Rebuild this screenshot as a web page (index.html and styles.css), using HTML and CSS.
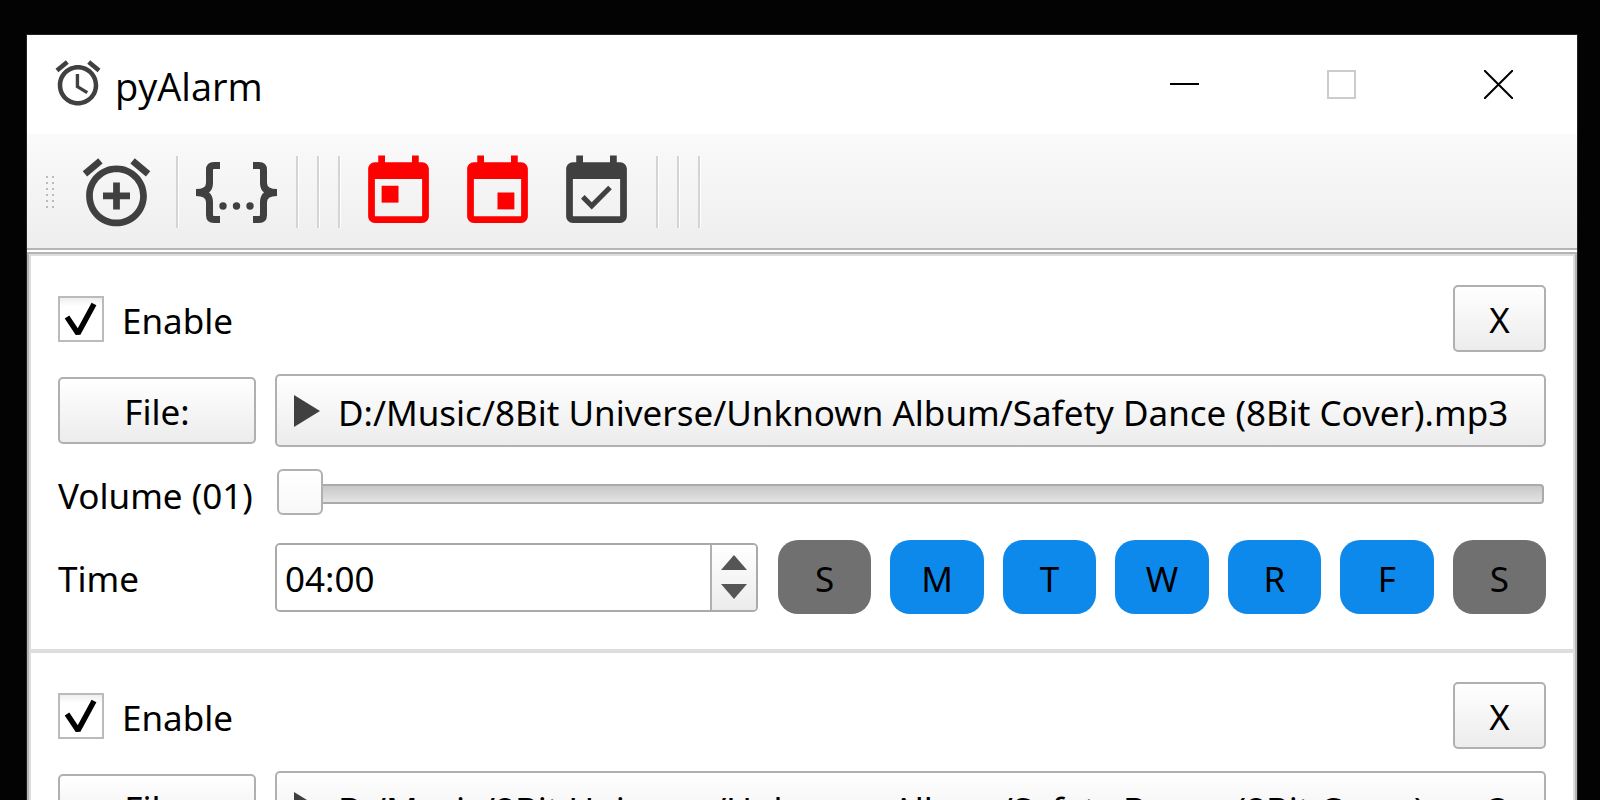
FILE: index.html
```html
<!DOCTYPE html>
<html lang="en">
  <head>
    <meta charset="UTF-8" />
    <meta name="viewport" content="width=device-width, initial-scale=1.0" />
    <title>pyAlarm</title>
    <link rel="stylesheet" href="styles.css">
  </head>
  <body>
    <!-- shared icon shapes -->
    <svg class="sprite" aria-hidden="true">
      <symbol id="bells" viewBox="0 0 24 24">
        <path d="M22 5.72l-4.6-3.86-1.29 1.53 4.6 3.86L22 5.72zM7.88 3.39L6.6 1.86 2 5.71l1.29 1.53 4.59-3.85zM12 4c-4.97 0-9 4.03-9 9s4.02 9 9 9c4.97 0 9-4.03 9-9s-4.03-9-9-9zm0 16c-3.87 0-7-3.13-7-7s3.13-7 7-7 7 3.13 7 7-3.13 7-7 7z" />
      </symbol>
      <symbol id="calendar" viewBox="0 0 24 24">
        <path d="M19 3h-1V1h-2v2H8V1H6v2H5c-1.11 0-1.99.9-1.99 2L3 19c0 1.1.89 2 2 2h14c1.1 0 2-.9 2-2V5c0-1.1-.9-2-2-2zm0 16H5V8h14v11z" />
      </symbol>
      <symbol id="check" viewBox="0 0 46 46">
        <path d="M9 21l11 16.500L36 8" fill="none" stroke="#000" stroke-width="5.500" stroke-linejoin="bevel" />
      </symbol>
    </svg>

    <div class="window">
      <header class="titlebar">
        <svg class="app-icon" viewBox="0 0 24 24">
          <use href="#bells" />
          <path d="M12.5 8H11v6l4.75 2.85.75-1.23-4-2.37V8z" />
        </svg>
        <h1 class="title">pyAlarm</h1>
        <div class="window-buttons">
          <button class="window-button" aria-label="Minimize">
            <svg viewBox="0 0 29 29"><path d="M0 14h29" stroke="#000" stroke-width="2" /></svg>
          </button>
          <button class="window-button" aria-label="Maximize" disabled>
            <svg viewBox="0 0 29 29"><path d="M1 1h27v27H1z" fill="none" stroke="#ccc" stroke-width="2" /></svg>
          </button>
          <button class="window-button" aria-label="Close">
            <svg viewBox="0 0 29 29"><path d="M0 0l29 29M29 0L0 29" stroke="#000" stroke-width="2" /></svg>
          </button>
        </div>
      </header>

      <div class="toolbar">
        <span class="grip"></span>
        <button class="tool" aria-label="Add alarm">
          <svg viewBox="0 0 24 24">
            <use href="#bells" />
            <path d="M13 9h-2v3H8v2h3v3h2v-3h3v-2h-3V9z" />
          </svg>
        </button>
        <span class="separator"></span>
        <button class="tool" aria-label="Edit JSON">
          <svg viewBox="0 0 81 81">
            <g fill="none" stroke="#404040" stroke-width="7">
              <path d="M24 13.500H18Q13.500 13.500 13.500 18V31Q13.500 40.500 0 40.500Q13.500 40.500 13.500 50V63Q13.500 67.500 18 67.500H24" />
              <path d="M57 13.500H63Q67.500 13.500 67.500 18V31Q67.500 40.500 81 40.500Q67.500 40.500 67.500 50V63Q67.500 67.500 63 67.500H57" />
            </g>
            <circle cx="27" cy="54" r="3.700" />
            <circle cx="40.500" cy="54" r="3.700" />
            <circle cx="54" cy="54" r="3.700" />
          </svg>
        </button>
        <span class="separator"></span>
        <span class="separator"></span>
        <span class="separator"></span>
        <button class="tool red" aria-label="Skip today">
          <svg viewBox="0 0 24 24">
            <use href="#calendar" />
            <path d="M7 10h5v5H7z" />
          </svg>
        </button>
        <button class="tool red" aria-label="Skip tomorrow">
          <svg viewBox="0 0 24 24">
            <use href="#calendar" />
            <path d="M12 12h5v5h-5z" />
          </svg>
        </button>
        <button class="tool" aria-label="Resume all">
          <svg viewBox="0 0 24 24">
            <use href="#calendar" />
            <path d="M16.530 11.060L15.470 10l-4.880 4.880-2.120-2.120-1.060 1.060L10.590 17l5.940-5.940z" />
          </svg>
        </button>
        <span class="separator"></span>
        <span class="separator"></span>
        <span class="separator"></span>
      </div>

      <main class="alarms">
        <section class="alarm">
          <div class="row top">
            <label class="enable">
              <span class="checkbox">
                <input type="checkbox" checked />
                <svg><use href="#check" /></svg>
              </span>
              <span class="label">Enable</span>
            </label>
            <button class="button">X</button>
          </div>
          <div class="row">
            <button class="button">File:</button>
            <button class="button path">
              <svg class="play" viewBox="0 0 26 32"><path d="M0 0l26 16L0 32z" /></svg>
              <span class="label">D:/Music/8Bit Universe/Unknown Album/Safety Dance (8Bit Cover).mp3</span>
            </button>
          </div>
          <div class="row volume">
            <label class="label" for="volume1">Volume (01)</label>
            <input class="slider" id="volume1" type="range" min="1" max="100" value="1" />
          </div>
          <div class="row">
            <label class="label" for="time1">Time</label>
            <div class="schedule">
              <div class="time">
                <input id="time1" type="text" value="04:00" />
                <div class="spin">
                  <button aria-label="Later"><svg viewBox="0 0 26 15"><path d="M13 0l13 15H0z" /></svg></button>
                  <button aria-label="Earlier"><svg viewBox="0 0 26 15"><path d="M0 0h26L13 15z" /></svg></button>
                </div>
              </div>
              <div class="days">
                <button class="day">S</button>
                <button class="day on">M</button>
                <button class="day on">T</button>
                <button class="day on">W</button>
                <button class="day on">R</button>
                <button class="day on">F</button>
                <button class="day">S</button>
              </div>
            </div>
          </div>
        </section>

        <section class="alarm">
          <div class="row top">
            <label class="enable">
              <span class="checkbox">
                <input type="checkbox" checked />
                <svg><use href="#check" /></svg>
              </span>
              <span class="label">Enable</span>
            </label>
            <button class="button">X</button>
          </div>
          <div class="row">
            <button class="button">File:</button>
            <button class="button path">
              <svg class="play" viewBox="0 0 26 32"><path d="M0 0l26 16L0 32z" /></svg>
              <span class="label">D:/Music/8Bit Universe/Unknown Album/Safety Dance (8Bit Cover).mp3</span>
            </button>
          </div>
        </section>
      </main>
    </div>
  </body>
</html>
```

FILE: styles.css
```css
* {
  margin: 0;
  padding: 0;
  box-sizing: border-box;
}

body {
  height: 100vh;
  padding: 34px 22px 0 26px;
  overflow: hidden;
  background: #030303;
  color: #000;
  font-family: "Noto Sans", Tahoma, sans-serif;
  font-size: 35px;
  line-height: 44px;
}

button,
input {
  font: inherit;
  color: inherit;
}

button {
  border: none;
  background: none;
}

svg {
  display: block;
  fill: #404040;
}

.sprite {
  position: absolute;
  width: 0;
  height: 0;
}

.window {
  border: 1px solid #222;
  border-bottom: none;
  background: #fff;
}

/* title bar */

.titlebar {
  display: flex;
  align-items: center;
  height: 99px;
  padding-left: 24px;
}

.app-icon {
  width: 54px;
  height: 54px;
  margin-bottom: 4px;
}

.title {
  margin-left: 10px;
  padding-top: 2px;
  font-family: "Open Sans", "Segoe UI", sans-serif;
  font-size: 38px;
  font-weight: normal;
}

.window-buttons {
  display: flex;
  align-self: stretch;
  margin-left: auto;
}

.window-button {
  display: flex;
  align-items: center;
  justify-content: center;
  width: 157px;
}

.window-button svg {
  width: 29px;
  height: 29px;
}

/* toolbar */

.toolbar {
  display: flex;
  align-items: center;
  gap: 18px;
  height: 116px;
  padding: 2px 0 0 17px;
  border-bottom: 2px solid #b4b4b4;
  background: linear-gradient(#fafafa, #eee);
}

.grip {
  width: 14px;
  height: 36px;
  padding-right: 2px;
  background: radial-gradient(circle, #bbb 1px, transparent 1px) 0 0 / 6px 6px;
  background-clip: content-box;
}

.tool svg {
  width: 81px;
  height: 81px;
}

.red svg {
  fill: #f00;
}

.separator {
  width: 3px;
  height: 72px;
  margin: 0 -1px 0 1px;
  border-left: 2px solid #d4d4d4;
  background: #fff;
}

/* alarm list */

.alarms {
  margin-top: 2px;
  padding: 2px 2px 0;
  border: 2px solid #b4b4b4;
  border-bottom: none;
  box-shadow: inset 0 0 0 2px #ddd;
}

.alarm {
  display: flex;
  flex-direction: column;
  gap: 22px;
  padding: 29px 27px 35px;
  border-bottom: 4px solid #ddd;
}

.row {
  display: grid;
  grid-template-columns: 198px 1fr;
  align-items: center;
  column-gap: 19px;
}

.top {
  grid-template-columns: 1fr 93px;
}

.label {
  padding-top: 4px;
}

.enable {
  display: flex;
  align-items: center;
  gap: 18px;
}

.checkbox {
  position: relative;
}

.checkbox input {
  display: block;
  width: 46px;
  height: 46px;
  appearance: none;
  border: 2px solid #bbb;
  background: linear-gradient(#eee, #fff 8px);
}

.checkbox svg {
  position: absolute;
  inset: 0;
  width: 46px;
  height: 46px;
  visibility: hidden;
  pointer-events: none;
}

.checkbox input:checked + svg {
  visibility: visible;
}

.button {
  height: 67px;
  padding-top: 2px;
  border: 2px solid #b0b0b0;
  border-radius: 5px;
  background: linear-gradient(#fff, #ececec);
}

.path {
  display: flex;
  align-items: center;
  gap: 18px;
  height: 73px;
  padding: 0 0 0 17px;
  overflow: hidden;
  white-space: nowrap;
}

.play {
  flex: none;
  width: 26px;
  height: 32px;
}

.volume {
  height: 49px;
  white-space: nowrap;
}

.slider {
  margin: 0 2px;
  height: 46px;
  appearance: none;
  background: none;
}

.slider::-webkit-slider-runnable-track {
  height: 20px;
  border: 2px solid #aaa;
  border-radius: 4px;
  background: linear-gradient(#c8c8c8, #e4e4e4);
}

.slider::-webkit-slider-thumb {
  width: 46px;
  height: 46px;
  margin: -17px 0 0 -2px;
  appearance: none;
  border: 2px solid #b0b0b0;
  border-radius: 6px;
  background: linear-gradient(#fff, #f8f8f8);
}

.schedule {
  display: grid;
  grid-template-columns: 38% 1fr;
  align-items: center;
  gap: 20px;
}

.time {
  display: flex;
  height: 69px;
  overflow: hidden;
  border: 2px solid #aaa;
  border-radius: 5px;
}

.time input {
  flex: 1;
  min-width: 0;
  padding: 4px 0 0 8px;
  border: none;
  background: #fff;
}

.spin {
  display: flex;
  flex-direction: column;
  justify-content: center;
  gap: 14px;
  padding: 0 9px;
  border-left: 2px solid #b0b0b0;
  background: linear-gradient(#fff, #ececec);
}

.spin svg {
  width: 26px;
  height: 15px;
  fill: #555;
}

.days {
  display: grid;
  grid-template-columns: repeat(7, 1fr);
  gap: 19px;
}

.day {
  height: 74px;
  padding-top: 4px;
  border-radius: 20px;
  background: #707070;
}

.on {
  background: #0d89ec;
}
```
